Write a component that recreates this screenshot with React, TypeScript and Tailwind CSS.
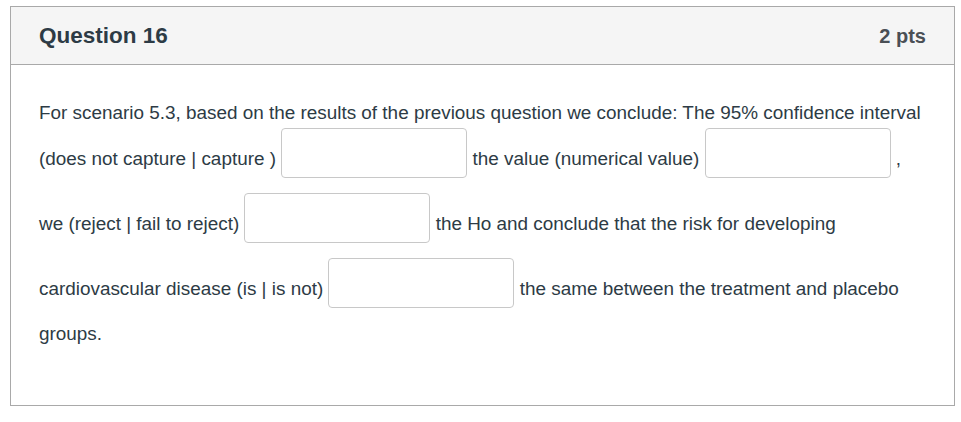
import React from "react";

const Blank = () => (
  <span className="inline-block overflow-hidden align-[-26px] mt-[1.5px] mb-[13.5px]">
    <input
      type="text"
      aria-label="answer"
      className="block h-[50px] w-[186px] rounded-[4px] border border-[#c8c8c8] bg-white outline-none"
    />
  </span>
);

export default function App() {
  return (
    <div className="min-h-[422px] bg-white pt-[6px] pl-[10px] font-['Liberation_Sans',Arial,sans-serif] text-[#2d3b45]">
      <div className="w-[945px] border border-[#a9a9a9]">
        <div className="flex h-[58px] items-center justify-between border-b border-[#a9a9a9] bg-[#f5f5f5] px-[28px]">
          <h2 className="text-[22.5px] font-bold">Question 16</h2>
          <span className="text-[20px] font-bold text-[#4a4f55]">2 pts</span>
        </div>
        <div className="px-[28px] pt-[35px] pb-[58px]">
          <p className="text-[18.9px] leading-[26px]">
            For scenario 5.3, based on the results of the previous question we conclude: The 95%
            confidence interval (does not capture | capture ) <Blank /> the value (numerical
            value) <Blank /> , we (reject | fail to reject) <Blank /> the Ho and conclude that the
            risk for developing cardiovascular disease (is | is not) <Blank /> the same between the
            treatment and placebo groups.
          </p>
        </div>
      </div>
    </div>
  );
}
